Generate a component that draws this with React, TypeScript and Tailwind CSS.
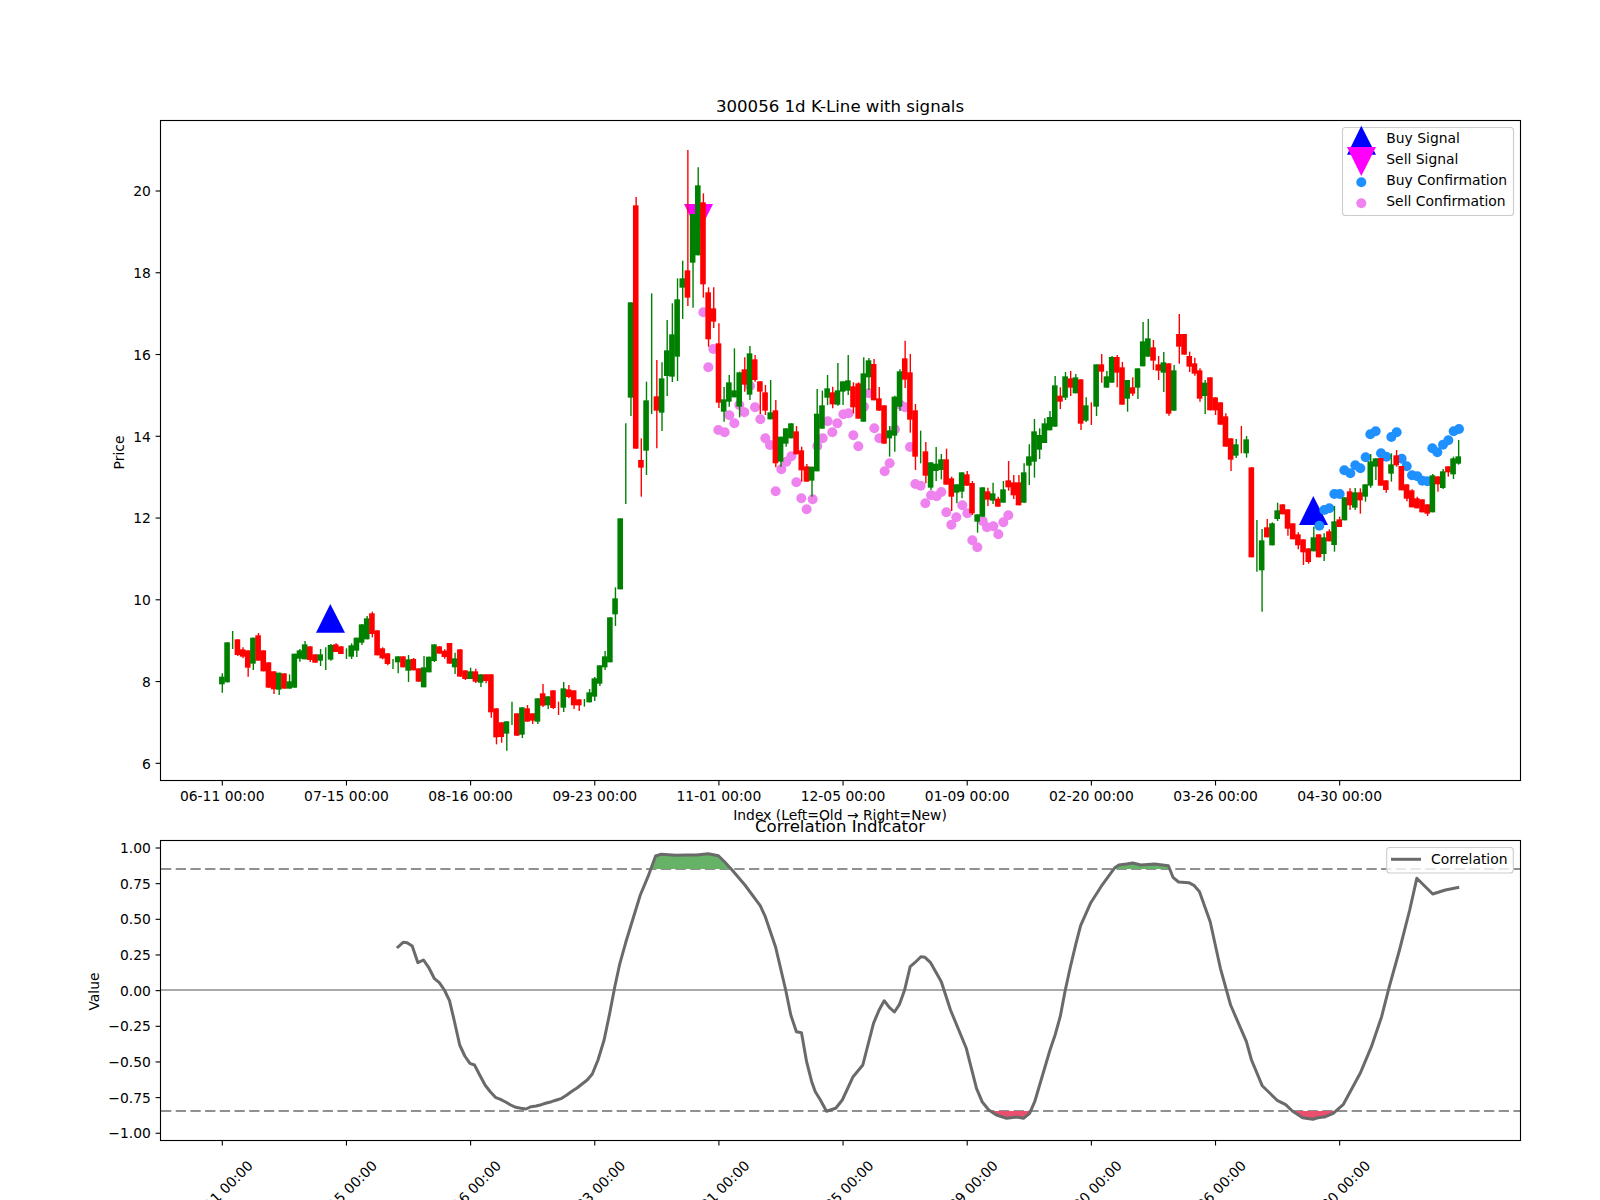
import React from "react";

const Z = (oy: number, rows: number[][]) =>
  rows.map(([g, bt, bb, wt = 0, wb = 0]) => {
    const t = (v: number) => oy + v / 3;
    return {
      g,
      body: bt ? [t(bt), t(bb)] : null,
      wick: [t(wt || bt), t(wb || bb)],
    };
  });

const candles = [
  ...Z(560, [
    [1,350,373,340,398],[1,247,367],[1,0,0,213,267],[0,238,285,0,288],[0,268,290,262,295],
    [0,271,323,0,350],[1,233,311,0,330],[0,226,302,219],[0,271,334],[0,307,383],
    [0,334,388,0,402],[1,338,389,0,405],[0,340,386],[1,364,386,343],[1,281,383],
    [1,271,296,267,305],[1,253,298,243],[0,259,300,0,306],[0,283,308],[1,283,302,267,318],
    [1,0,0,262,330],[1,255,299,252,302],[0,253,276,250],[0,259,282],[1,0,0,265,297],
    [1,256,290,250,297],[1,233,272,0,291],[1,193,248,0,255],[1,175,238,168],[0,160,222,155,232],
    [0,211,286],[0,265,295,262,298],[0,280,312,0,316],[1,0,0,297,327],[1,289,307,0,340],
    [0,289,322],[1,298,332,285,366],[0,297,331,294],[0,325,365],[1,322,382,288],
    [1,290,337],[1,253,303,0,306],[0,259,281],[0,272,291,268,296],[0,249,311],
  ]),
  ...Z(500, [
    [1,475,502,458,522],[0,448,530],[0,511,537,0,540],[1,514,537,503],[0,514,545,506,549],
    [1,523,548,0,561],[0,523,543,0,550],[0,523,637,0,653],[0,625,712,0,733],[0,667,711,0,728],
    [1,664,701,0,752],[1,0,0,605,675],[0,640,707],[1,622,704,0,714],[0,625,665,615],
    [0,640,662,0,672],[1,595,665,0,672],[0,580,617,552,621],[1,589,616,0,627],[0,571,624,0,627],
    [0,0,0,605,645],[1,565,623,546,636],[0,568,591,555,595],[0,571,616,0,627],[0,598,616,0,633],
    [1,0,0,597,620],[1,577,607,567],[1,535,590,531,603],[1,496,551,0,558],[1,469,502,453,510],
    [1,352,487],[1,295,343,262,378],[1,55,268],
  ]),
  ...Z(130, [
    [1,0,0,880,1122],[1,517,803,0,858],[0,226,956,201],[0,990,1013,925,1100],[1,811,962,755,1035],
    [1,0,0,490,852],[0,799,842,690,955],[1,745,848,697,903],[1,661,738,570,798],[1,613,740,520,756],
    [1,508,680,445,753],[1,445,473,392,567],[0,421,503,60,528],[1,252,398,0,533],[1,166,376,112],
    [0,217,463,190,503],[0,487,628,472,650],[0,535,575,472,594],[0,640,818,580,834],[1,808,845,771,875],
    [1,757,815,735,830],[1,781,802,655],[1,727,830,725,862],[0,718,764,682,785],[1,670,794,648,810],
    [0,688,750,675,755],[0,754,785,0,852],[0,787,842,765,855],[1,847,868,750],[0,841,1000,810,1012],
    [1,920,995,0,1010],[1,895,941,0,950],[1,880,925],[0,904,973,888],[0,961,1021,950,1055],
    [0,1009,1055,1002],[1,1010,1052,0,1100],[1,851,1024,777],[1,826,896,782],[1,775,803,735,825],
    [0,787,823,770,835],[1,781,824,699,827],[1,754,785,0,825],[1,751,782,675,795],[0,769,832,757,850],
    [0,760,866,757],[1,730,875,682],[1,691,742,684,780],[0,702,811,687],[0,805,842,771],
    [0,826,941],[1,901,925,888,980],[1,800,917,797,965],[1,724,830,718,843],
  ]),
  ...Z(300, [
    [0,175,239,122,264],[0,217,359,162,398],[0,331,470,312,510],[1,0,0,392,490],[0,454,527,426,550],
    [1,487,563,0,570],[1,491,513,441,543],[1,478,510,462,538],[0,478,554,446],[0,535,590,530,633],
    [1,553,578,0,610],[1,517,575,0,595],[0,523,557,513],[0,549,640,543,645],[1,643,665,0,698],
    [1,562,650],[0,574,599,563,618],[1,580,602,548,612],[0,596,620,590],[1,568,608,543],
    [0,541,562,483,572],[0,547,586,525,597],[0,547,616,525],[1,517,608,490],[1,469,497,433,555],
    [1,394,485,357,533],[1,405,449,385,477],[1,370,429,355],[1,351,391,333],[1,256,380,228],
    [0,287,305,262,327],[1,229,293,216,300],[0,235,263,213,288],[1,232,280,222],[0,238,371,0,390],
    [1,316,362,292,366],[0,0,0,307,375],[1,193,320,0,348],[0,193,215,162,248],[1,229,263,213],
    [1,171,248,168],[0,171,218,165,262],[0,202,314,186],[1,240,296,0,335],[0,262,281,232,288],
    [1,205,263,0,297],[1,124,199,66],[1,115,170,57],[0,142,182,120,210],[0,193,212,168,240],
    [1,187,218,156,276],[0,190,341,0,347],[1,211,332,195],[0,102,140,42,191],[0,102,164],
    [0,168,200,155,216],[0,190,221,173,227],[0,211,296,205,305],[1,248,288,240,342],[0,232,331],
    [0,292,331,0,345],[0,307,374],[0,349,440,340],[0,415,479,0,513],[1,433,467,417,474],
    [0,0,0,378,460],[1,418,460,408,473],[0,502,772],[1,0,0,660,815],[1,721,811,687,935],
    [0,682,712,657],[1,670,736,667],[1,631,657,608,663],[0,613,643],[0,628,686,0,707],
    [0,670,718],[0,703,736,697,748],[0,718,757,0,795],[0,745,786,0,791],[1,712,754,680],
    [0,703,772],[1,712,762,700,783],[0,694,724,688],[1,664,735,618,755],[0,658,681,650],
    [1,592,661],[0,574,616,565,630],[1,577,623,564,630],[0,577,601,565,641],[1,553,590,0,605],
    [1,484,557,462,563],[1,475,500,0,540],[0,474,557],[0,541,570,0,578],[1,493,521,460,545],
    [0,466,496,450,500],[0,498,571],[0,553,596,0,604],[0,571,622,568],[0,595,625,590],
    [0,598,637],[0,613,641,0,648],[1,526,637,522],[0,529,553,0,575],[1,514,564,507,567],
    [0,499,517,0,530],[1,475,523,470,537],[1,469,491,420,494],
  ]),
];

const xOf = (i: number) => 222.3 + 5.173 * i;

const pinkA = [[310,547],[340,657],[325,712],[355,900],[374,907],[388,856],[403,880],[418,825],[433,847],[450,768],[465,832],[481,868],[496,925],[510,945],[527,1084],[544,1018],[559,995],[574,979],[589,1057],[604,1105],[620,1138],[638,1108],[652,948],[668,925],[683,874],[697,907],[712,880],[730,853],[746,850],[760,916],[775,949],[792,830],[807,790],[823,895],[838,925]];
const pinkB = [[14,514],[29,490],[45,388],[62,315],[75,322],[90,441],[106,552],[122,557],[136,610],[153,586],[170,589],[184,576],[199,637],[214,674],[229,652],[247,616],[262,640],[277,721],[292,742],[308,663],[321,682],[340,679],[355,703],[370,667],[385,646]];
const blue = [[418,677],[433,630],[448,625],[463,582],[479,582],[493,511],[511,520],[526,496],[541,505],[557,472],[571,403],[587,394],[603,460],[619,470],[634,411],[650,397],[665,476],[680,499],[696,526],[712,529],[727,542],[742,544],[757,445],[772,457],[789,434],[805,421],[821,394],[837,387]];

const corrA = [[778,564],[790,547],[798,548],[808,558],[819,608],[830,600],[840,622],[851,655],[861,668],[871,690],[881,722],[890,780],[901,855],[911,888],[921,910],[930,915],[941,947],[951,976],[961,995],[971,1012],[981,1018],[991,1026],[1001,1035],[1011,1042],[1021,1045],[1031,1047],[1041,1040],[1051,1038],[1061,1034],[1071,1029],[1081,1025],[1091,1020],[1101,1015],[1111,1005],[1121,994],[1131,984],[1141,972],[1151,960],[1161,942],[1172,900],[1184,840],[1195,760],[1205,680],[1215,610],[1226,550],[1238,490],[1255,405],[1270,350],[1285,288],[1296,283],[1310,284],[1325,286],[1345,285],[1365,285],[1388,281],[1408,287],[1420,305],[1435,330],[1460,375],[1490,437],[1500,470],[1520,560],[1540,690],[1550,765],[1561,815]];
const corrB = [[3,818],[13,905],[23,965],[30,995],[40,1020],[52,1054],[70,1045],[83,1020],[104,950],[123,915],[144,790],[155,750],[165,722],[175,742],[185,756],[195,733],[205,690],[216,620],[225,608],[237,590],[245,592],[256,608],[266,635],[277,665],[295,750],[326,865],[346,985],[357,1025],[370,1050],[385,1065],[405,1075],[425,1071],[438,1075],[450,1060],[460,1025],[490,870],[500,825],[510,770],[520,690],[530,620],[541,550],[550,497],[570,428],[590,380],[617,323],[625,315],[640,312],[652,309],[668,315],[695,312],[722,317],[731,352],[742,366],[762,368],[772,376],[783,395],[804,485],[824,625],[844,735],[875,845],[885,900],[906,977],[936,1022],[952,1034],[965,1053],[985,1073],[1005,1078],[1015,1073],[1030,1070],[1045,1060],[1065,1033],[1098,940],[1120,860],[1140,770],[1155,680],[1175,570],[1195,450],[1209,355],[1240,402],[1265,390],[1292,382]];

const ptA = ([x, y]: number[]) => `${(x / 1.96).toFixed(1)},${(760 + y / 3).toFixed(1)}`;
const ptB = ([x, y]: number[]) => `${(800 + x / 1.96).toFixed(1)},${(760 + y / 3).toFixed(1)}`;
const corrPts = [...corrA.map(ptA), ...corrB.map(ptB)].join(" ");

const fillG1 = [[1278,327],[1285,288],[1296,283],[1310,284],[1325,286],[1345,285],[1365,285],[1388,281],[1408,287],[1420,305],[1433,327]].map(ptA).join(" ");
const fillG2 = [[613,327],[617,323],[625,315],[640,312],[652,309],[668,315],[695,312],[722,317],[724,327]].map(ptB).join(" ");
const fillR1 = [[375,1053],[385,1065],[405,1075],[425,1071],[438,1075],[450,1060],[452,1053]].map(ptB).join(" ");
const fillR2 = [[965,1053],[985,1073],[1005,1078],[1015,1073],[1030,1070],[1045,1060],[1052,1053]].map(ptB).join(" ");

const dates = ["06-11 00:00","07-15 00:00","08-16 00:00","09-23 00:00","11-01 00:00","12-05 00:00","01-09 00:00","02-20 00:00","03-26 00:00","04-30 00:00"];
const ticksX = dates.map((_, i) => xOf(i * 24));
const priceTicks = [20, 18, 16, 14, 12, 10, 8, 6];
const priceY = (p: number) => 191 + (20 - p) * 40.88;
const valTicks = ["1.00","0.75","0.50","0.25","0.00","−0.25","−0.50","−0.75","−1.00"];

export default function App() {
  return (
    <div className="w-[1600px] h-[1200px] overflow-hidden bg-white">
      <svg width={1600} height={1200} viewBox="0 0 1600 1200" className="block font-['DejaVu_Sans'] text-[13.89px] fill-black">
        {/* price axes */}
        <text x={840} y={111.5} textAnchor="middle" className="text-[16.6px]">300056 1d K-Line with signals</text>
        <polygon points="330.3,604 316,632.7 345,632.7" fill="#0000ff" />
        <polygon points="1313.3,496 1299,525 1328,525" fill="#0000ff" />
        <polygon points="684,204 713,204 698.5,233" fill="#ff00ff" />
        {pinkA.map(([x, y], i) => <circle key={i} cx={600 + x / 3} cy={130 + y / 3} r={5} fill="#ee82ee" />)}
        {pinkB.map(([x, y], i) => <circle key={i} cx={880 + x / 3} cy={300 + y / 3} r={5} fill="#ee82ee" />)}
        {blue.map(([x, y], i) => <circle key={i} cx={1180 + x / 3} cy={300 + y / 3} r={5} fill="#1e90ff" />)}
        {candles.map((c, i) => {
          const col = c.g ? "#008000" : "#ff0000";
          const x = xOf(i);
          return (
            <g key={i}>
              <line x1={x} x2={x} y1={c.wick[0]} y2={c.wick[1]} stroke={col} strokeWidth={1.4} />
              {c.body && <rect x={x - 3.2} width={5.6} y={c.body[0]} height={c.body[1] - c.body[0]} fill={col} />}
            </g>
          );
        })}
        <rect x={160.5} y={120.5} width={1360} height={660} fill="none" stroke="#000" strokeWidth={1.11} />
        {priceTicks.map((p) => (
          <g key={p}>
            <line x1={155.6} x2={160.5} y1={priceY(p)} y2={priceY(p)} stroke="#000" strokeWidth={1.11} />
            <text x={150.8} y={priceY(p) + 5.4} textAnchor="end">{p}</text>
          </g>
        ))}
        {ticksX.map((x, i) => (
          <g key={i}>
            <line x1={x} x2={x} y1={781} y2={785.5} stroke="#000" strokeWidth={1.11} />
            <text x={x} y={801} textAnchor="middle">{dates[i]}</text>
          </g>
        ))}
        <text x={840} y={820} textAnchor="middle">Index (Left=Old → Right=New)</text>
        <text transform="translate(124 452.5) rotate(-90)" textAnchor="middle">Price</text>

        {/* price legend */}
        <rect x={1342.5} y={127.5} width={171} height={88} rx={3} fill="#fff" fillOpacity={0.8} stroke="#ccc" strokeWidth={1.11} />
        <polygon points="1361.3,125.7 1347,154.7 1376,154.7" fill="#0000ff" />
        <polygon points="1347,147 1376,147 1361.3,176" fill="#ff00ff" />
        <circle cx={1361.3} cy={182.3} r={5} fill="#1e90ff" />
        <circle cx={1361.3} cy={203.3} r={5} fill="#ee82ee" />
        <text x={1386.3} y={143.3}>Buy Signal</text>
        <text x={1386.3} y={164.3}>Sell Signal</text>
        <text x={1386.3} y={185.3}>Buy Confirmation</text>
        <text x={1386.3} y={206.3}>Sell Confirmation</text>

        {/* correlation axes */}
        <text x={840} y={831.7} textAnchor="middle" className="text-[16.6px]">Correlation Indicator</text>
        <line x1={161} x2={1520} y1={990} y2={990} stroke="#aaaaaa" strokeWidth={2.2} />
        <line x1={161} x2={1520} y1={869} y2={869} stroke="#909090" strokeWidth={2.2} strokeDasharray="10.3 4.4" />
        <line x1={161} x2={1520} y1={1111} y2={1111} stroke="#909090" strokeWidth={2.2} strokeDasharray="10.3 4.4" />
        <polygon points={fillG1} fill="#66b266" />
        <polygon points={fillG2} fill="#66b266" />
        <polygon points={fillR1} fill="#ea4f70" />
        <polygon points={fillR2} fill="#ea4f70" />
        <polyline points={corrPts} fill="none" stroke="#6a6a6a" strokeWidth={3} strokeLinejoin="round" />
        <rect x={160.5} y={840.5} width={1360} height={300} fill="none" stroke="#000" strokeWidth={1.11} />
        {valTicks.map((t, i) => {
          const y = 848 + i * 35.66;
          return (
            <g key={t}>
              <line x1={155.6} x2={160.5} y1={y} y2={y} stroke="#000" strokeWidth={1.11} />
              <text x={150.8} y={y + 5} textAnchor="end">{t}</text>
            </g>
          );
        })}
        {ticksX.map((x, i) => (
          <g key={i}>
            <line x1={x} x2={x} y1={1141} y2={1145.5} stroke="#000" strokeWidth={1.11} />
            <text transform={`translate(${x - 2} 1193) rotate(-45)`} textAnchor="middle" dominantBaseline="central">{dates[i]}</text>
          </g>
        ))}
        <text transform="translate(99 991.5) rotate(-90)" textAnchor="middle">Value</text>

        {/* correlation legend */}
        <rect x={1386.7} y={847.5} width={126.6} height={25.5} rx={3} fill="#fff" fillOpacity={0.8} stroke="#ccc" strokeWidth={1.11} />
        <line x1={1391} x2={1421} y1={859.3} y2={859.3} stroke="#6a6a6a" strokeWidth={3} />
        <text x={1431} y={864}>Correlation</text>
      </svg>
    </div>
  );
}
